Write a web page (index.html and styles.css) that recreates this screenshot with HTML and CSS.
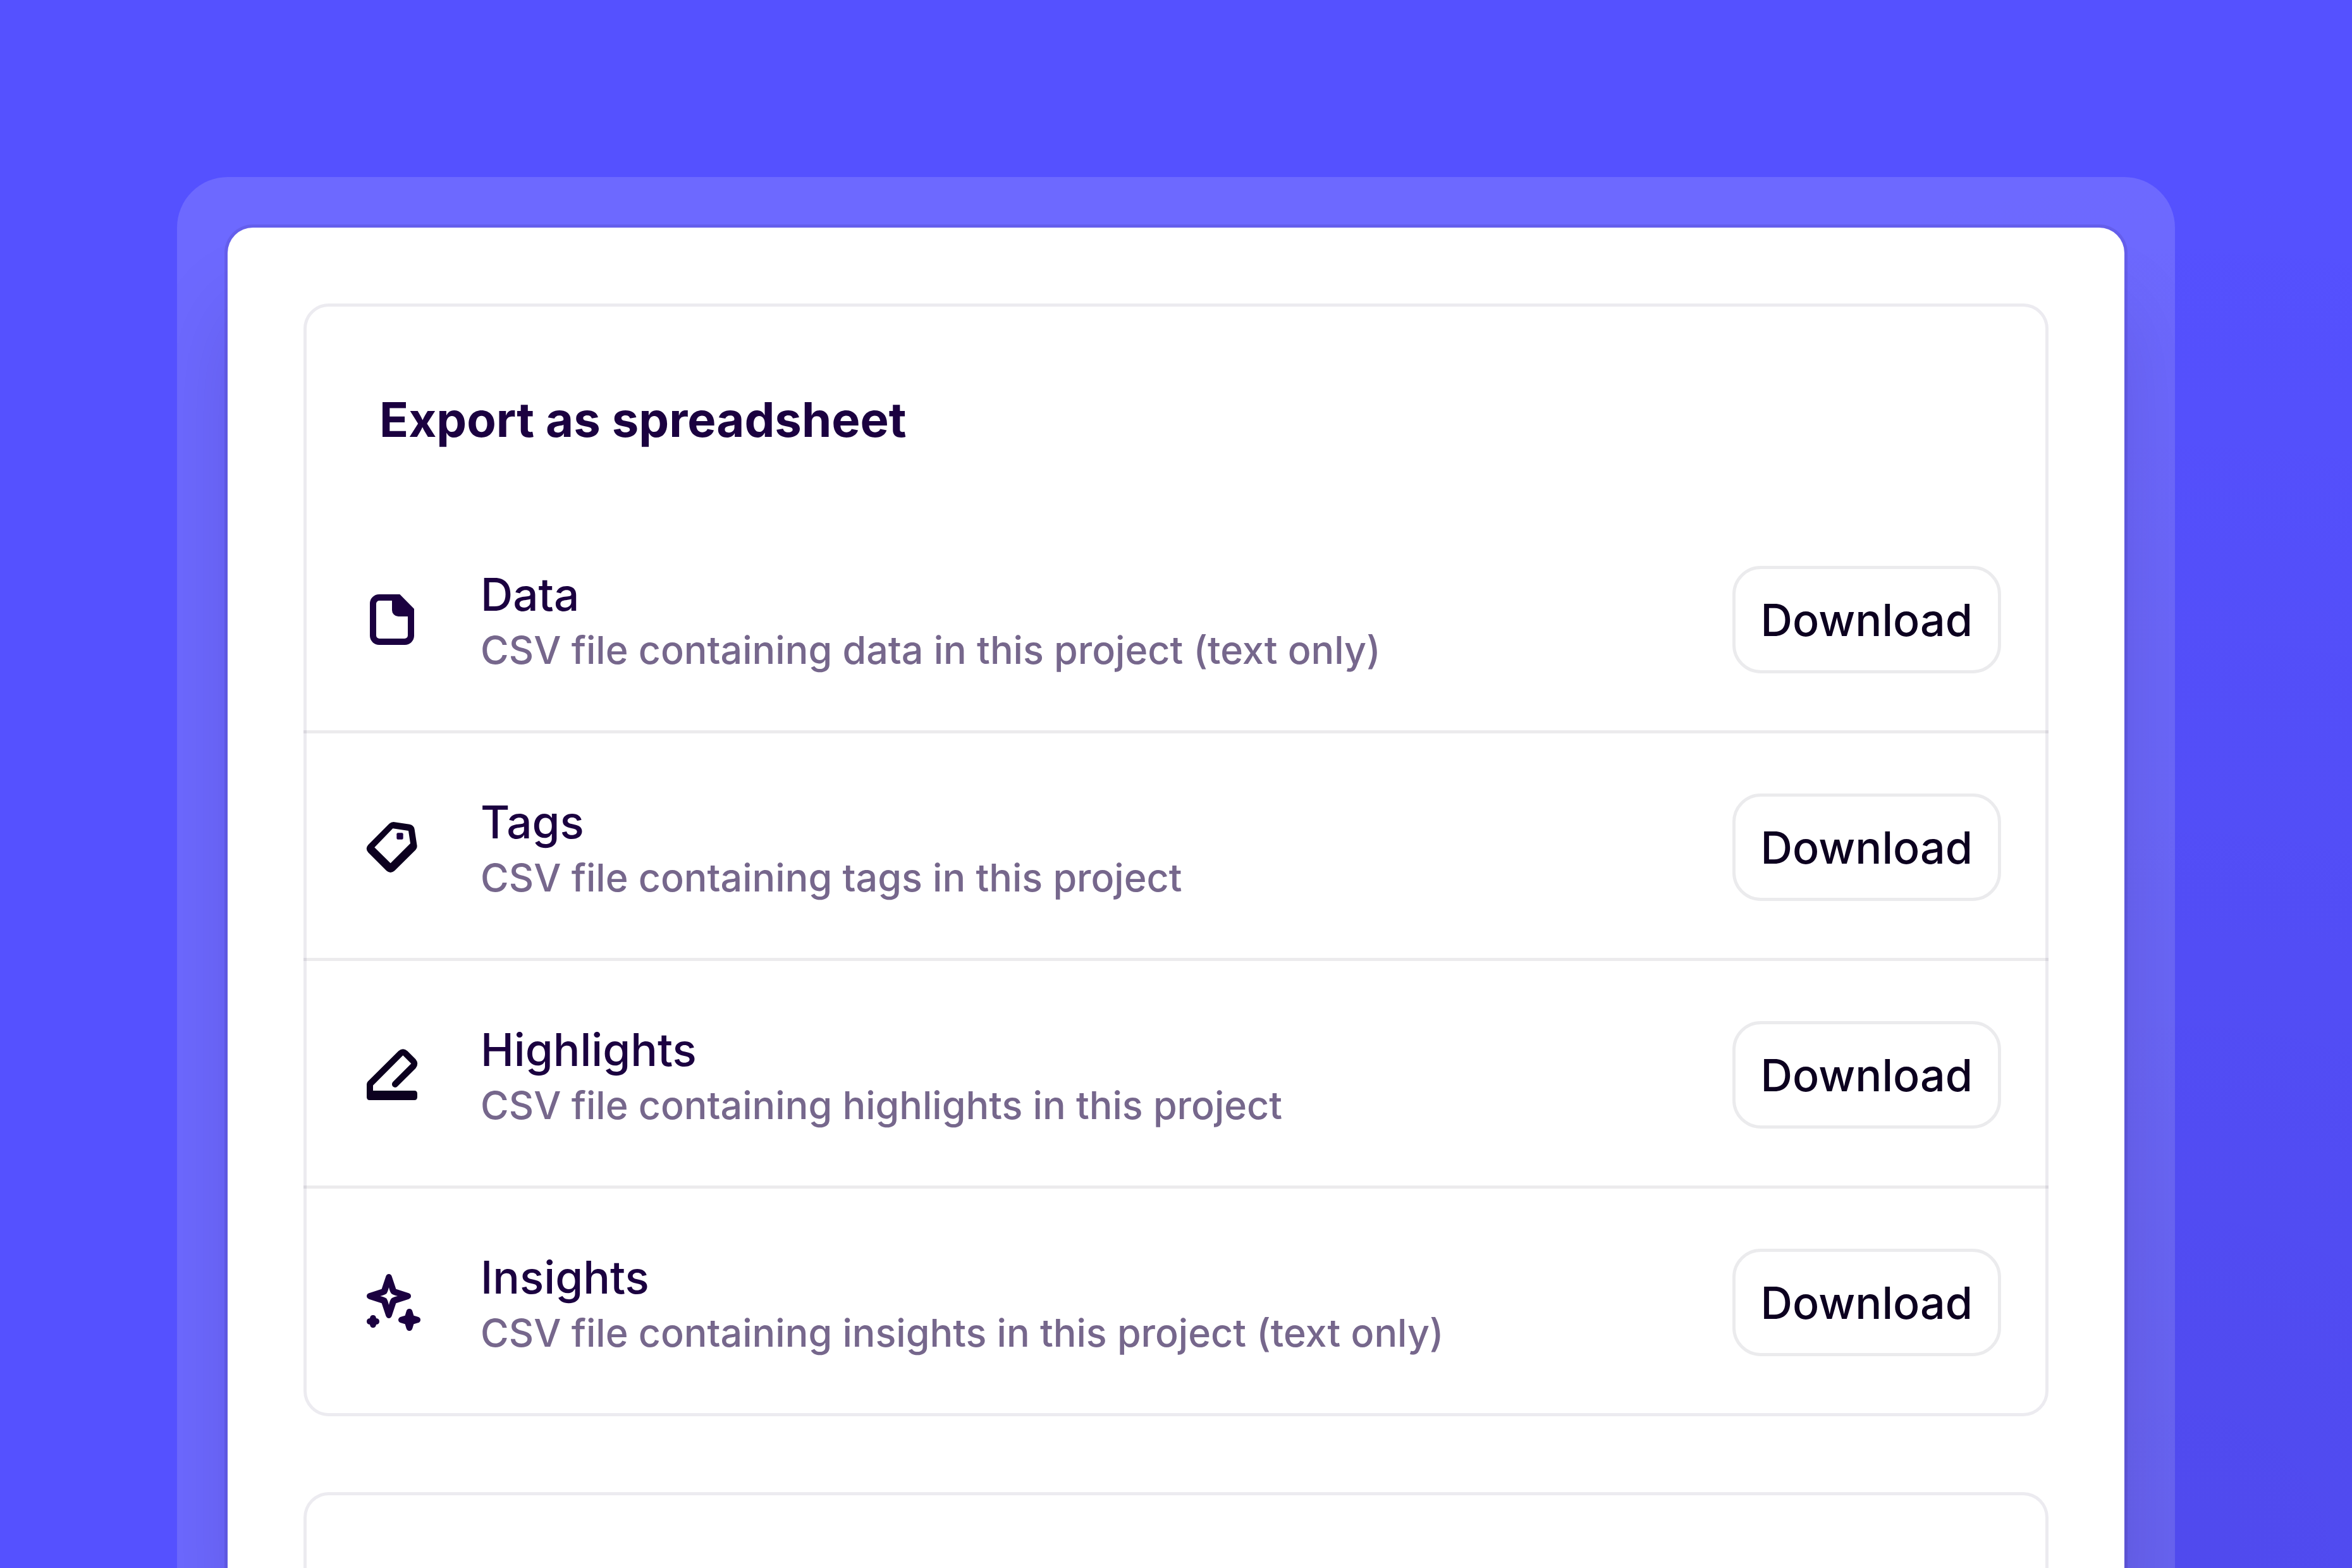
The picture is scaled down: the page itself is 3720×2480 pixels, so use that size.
FILE: index.html
```html
<!DOCTYPE html>
<html lang="en">
<head>
<meta charset="utf-8">
<meta name="viewport" content="width=device-width, initial-scale=1">
<title>Export</title>
<link rel="stylesheet" href="styles.css">
</head>
<body>
<div class="frame">
  <main class="panel">
    <section class="card" aria-labelledby="export-title">
      <h1 class="card-title" id="export-title">Export as spreadsheet</h1>
      <ul class="rows">
        <li class="row">
          <svg class="icon" viewBox="30 30 300 300" aria-hidden="true"><path fill="#1b0140" fill-rule="evenodd" d="M119 60H217L285 129V256A44 44 0 0 1 241 300H119A44 44 0 0 1 75 256V104A44 44 0 0 1 119 60ZM120 90A15 15 0 0 0 105 105V255A15 15 0 0 0 120 270H240A15 15 0 0 0 255 255V165H210A30 30 0 0 1 180 135V90Z"/></svg>
          <div class="text">
            <h2 class="name">Data</h2>
            <p class="desc">CSV file containing data in this project (text only)</p>
          </div>
          <button class="button" type="button">Download</button>
        </li>
        <li class="row">
          <svg class="icon" viewBox="30 30 300 300" aria-hidden="true"><path fill="#0c001f" fill-rule="evenodd" d="M187 60L263 71Q284 75 287 95L299 174Q300 185 292 193L192 292Q173 308 154 292L67 205Q51 187 67 169L167 68Q176 60 187 60ZM184 91L97 181L173 256L267 162L258 102Z"/><rect x="202" y="112" width="31" height="31" rx="6" fill="#1b0140"/></svg>
          <div class="text">
            <h2 class="name">Tags</h2>
            <p class="desc">CSV file containing tags in this project</p>
          </div>
          <button class="button" type="button">Download</button>
        </li>
        <li class="row">
          <svg class="icon" viewBox="30 30 300 300" aria-hidden="true"><path fill="#0c001f" d="M60 224Q60 217 66 211L211 67Q232 49 253 67L292 106Q310 128 292 149L206 235A15 15 0 0 1 184 214L271 127L232 88L90 230V255H286Q300 255 300 270V285Q300 300 286 300H74Q60 300 60 286Z"/></svg>
          <div class="text">
            <h2 class="name">Highlights</h2>
            <p class="desc">CSV file containing highlights in this project</p>
          </div>
          <button class="button" type="button">Download</button>
        </li>
        <li class="row">
          <svg class="icon" viewBox="30 60 300 300" aria-hidden="true"><g fill="#1b0140"><path fill-rule="evenodd" d="M151 86Q155 75 165 75T179 86L199 146L259 166Q270 170 270 180T259 194L199 214L179 274Q175 285 165 285T151 274L131 214L71 194Q60 190 60 180T71 166L131 146ZM165 138Q160 160 154 168Q146 174 124 180Q146 185 154 191Q160 199 165 222Q170 199 177 191Q184 185 207 180Q184 174 177 168Q170 160 165 138Z"/><path d="M248 252Q251 240 262.500 240T277 252L283 272L303 278Q315 281 315 292.500T303 307L283 313L277 333Q273 345 262.500 345T248 333L242 313L222 307Q210 303 210 292.500T222 278L242 272Z"/><path d="M75 285Q77 270 90 270T105 285Q120 287 120 300T105 315Q103 330 90 330T75 315Q60 313 60 300T75 285Z"/></g></svg>
          <div class="text">
            <h2 class="name">Insights</h2>
            <p class="desc">CSV file containing insights in this project (text only)</p>
          </div>
          <button class="button" type="button">Download</button>
        </li>
      </ul>
    </section>
    <section class="card card-next"></section>
  </main>
</div>
</body>
</html>
```
FILE: styles.css
```css
* {
  box-sizing: border-box;
}

body {
  display: flex;
  flex-direction: column;
  min-height: 100vh;
  margin: 0;
  padding: 280px 280px 0;
  background:
    radial-gradient(ellipse 55% 90% at 93% 100%, rgba(27, 1, 64, 0.09), rgba(27, 1, 64, 0)),
    #5551ff;
  font-family: Inter, "Liberation Sans", sans-serif;
  color: #1b0140;
}

.frame {
  flex: 1;
  display: flex;
  flex-direction: column;
  padding: 80px 80px 0;
  border-radius: 80px 80px 0 0;
  background: rgba(255, 255, 255, 0.14);
  overflow: hidden;
}

.panel {
  flex: 1;
  display: flex;
  flex-direction: column;
  gap: 120px;
  padding: 120px 120px 0;
  border-radius: 40px 40px 0 0;
  background: #fff;
  box-shadow:
    0 0 0 5px rgba(27, 1, 64, 0.1),
    0 125px 140px -10px rgba(27, 1, 64, 0.16);
}

.card {
  border: 5px solid #ecebf0;
  border-radius: 40px;
}

/* the next card carries on below the fold */
.card-next {
  flex: 1;
  min-height: 120px;
  border-bottom: 0;
  border-radius: 40px 40px 0 0;
}

.card-title {
  margin: 0;
  padding: 130px 115px 0;
  font-size: 76px;
  line-height: 96px;
  font-weight: 700;
}

.rows {
  margin: 89px -5px -5px;
  padding: 0;
  list-style: none;
}

.row {
  display: flex;
  align-items: center;
  min-height: 360px;
  padding: 5px 75px 0 90px;
  border-bottom: 5px solid rgba(12, 0, 31, 0.08);
}

.row:last-child {
  border-bottom-color: transparent;
}

.icon {
  flex: none;
  width: 100px;
  height: 100px;
}

.text {
  flex: 1;
  padding: 8px 40px 0 90px;
}

.name {
  margin: 0;
  font-size: 71px;
  line-height: 88px;
  font-weight: 500;
}

.desc {
  margin: 0;
  font-size: 61px;
  line-height: 88px;
  font-weight: 500;
  color: #76678c;
}

.button {
  height: 170px;
  padding: 0 40px;
  border: 5px solid #ebebed;
  border-radius: 45px;
  background: #fff;
  font: inherit;
  font-size: 70px;
  font-weight: 500;
  color: #0c001f;
}
```
